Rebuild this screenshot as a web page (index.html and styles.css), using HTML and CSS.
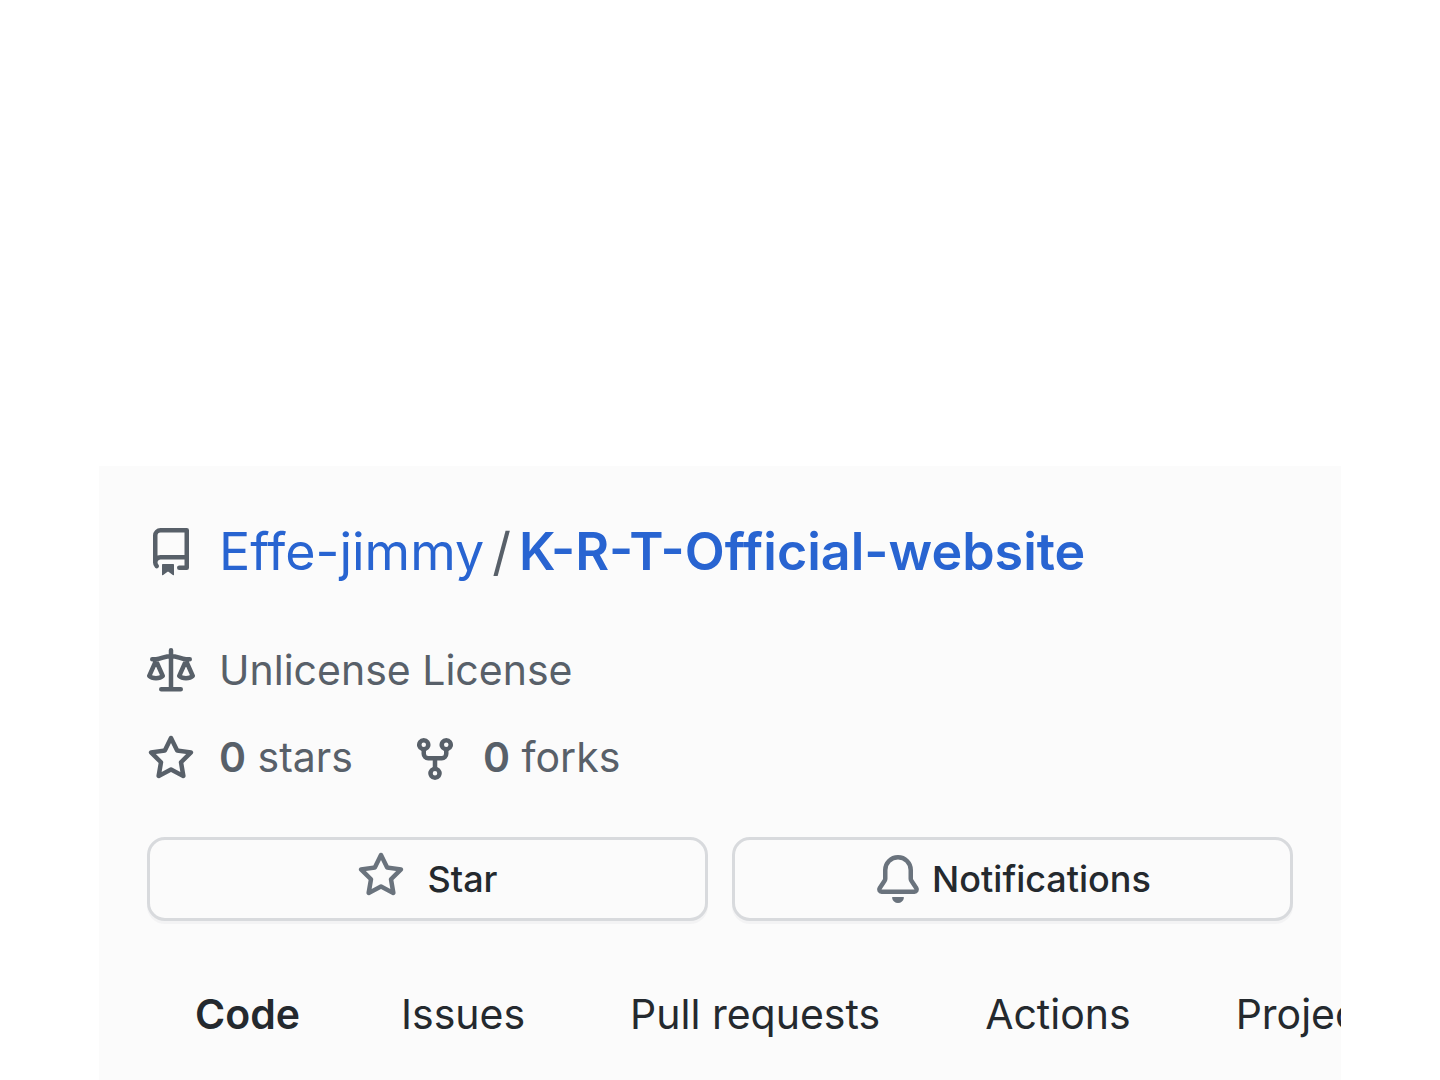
FILE: index.html
```html
<!DOCTYPE html>
<html lang="en">
<head>
<meta charset="utf-8">
<meta name="viewport" content="width=device-width, initial-scale=1">
<title>Effe-jimmy/K-R-T-Official-website</title>
<link rel="stylesheet" href="styles.css">
</head>
<body>
<svg class="sprite" aria-hidden="true">
  <symbol id="star" viewBox="0 0 16 16"><path fill-rule="evenodd" d="M8 .25a.75.75 0 01.673.418l1.882 3.815 4.21.612a.75.75 0 01.416 1.279l-3.046 2.97.719 4.192a.75.75 0 01-1.088.791L8 12.347l-3.766 1.98a.75.75 0 01-1.088-.79l.72-4.194L.818 6.374a.75.75 0 01.416-1.28l4.21-.611L7.327.668A.75.75 0 018 .25zm0 2.445L6.615 5.5a.75.75 0 01-.564.41l-3.097.45 2.24 2.184a.75.75 0 01.216.664l-.528 3.084 2.769-1.456a.75.75 0 01.698 0l2.77 1.456-.53-3.084a.75.75 0 01.216-.664l2.24-2.183-3.096-.45a.75.75 0 01-.564-.41L8 2.694z"/></symbol>
</svg>
<main class="repo">
  <h1 class="title">
    <svg class="icon" viewBox="0 0 16 16" aria-hidden="true"><path fill-rule="evenodd" d="M2 2.5A2.5 2.5 0 014.5 0h8.75a.75.75 0 01.75.75v12.5a.75.75 0 01-.75.75h-2.5a.75.75 0 110-1.5h1.75v-2h-8a1 1 0 00-.714 1.7.75.75 0 01-1.072 1.05A2.495 2.495 0 012 11.5v-9zm10.5-1V9h-8c-.356 0-.694.074-1 .208V2.5a1 1 0 011-1h8zM5 12.25v3.25a.25.25 0 00.4.2l1.45-1.087a.25.25 0 01.3 0L8.6 15.7a.25.25 0 00.4-.2v-3.25a.25.25 0 00-.25-.25h-3.5a.25.25 0 00-.25.25z"/></svg>
    <a class="owner" href="#owner">Effe-jimmy</a>
    <span class="slash">/</span>
    <a class="name" href="#repo">K-R-T-Official-website</a>
  </h1>
  <div class="meta">
    <a class="fact" href="#license"><svg class="icon" viewBox="0 0 16 16" aria-hidden="true"><g fill="none" stroke="currentColor" stroke-width="1.5" stroke-linecap="round" stroke-linejoin="round"><path d="M8 .75v13M4.75 13.75h6.5M1.75 3.75h1.2C4.8 3.75 5.8 2.65 8 2.65s3.2 1.1 5.05 1.1h1.2M3 4.25L.75 9.3c1 1 3.5 1 4.5 0zM13 4.25L10.75 9.3c1 1 3.5 1 4.5 0z"/></g></svg><span>Unlicense License</span></a>
    <div class="counts">
      <a class="fact" href="#stars"><svg class="icon" aria-hidden="true"><use href="#star"/></svg><span><b>0</b> stars</span></a>
      <a class="fact" href="#forks"><svg class="icon" viewBox="0 0 16 16" aria-hidden="true"><path fill-rule="evenodd" d="M5 3.25a.75.75 0 11-1.5 0 .75.75 0 011.5 0zm0 2.122a2.25 2.25 0 10-1.5 0v.878A2.25 2.25 0 005.75 8.5h1.5v2.128a2.251 2.251 0 101.5 0V8.5h1.5a2.25 2.25 0 002.25-2.25v-.878a2.25 2.25 0 10-1.5 0v.878a.75.75 0 01-.75.75h-4.5A.75.75 0 015 6.25v-.878zm3.75 7.378a.75.75 0 11-1.5 0 .75.75 0 011.5 0zm3-8.75a.75.75 0 100-1.5.75.75 0 000 1.5z"/></svg><span><b>0</b> forks</span></a>
    </div>
  </div>
  <div class="actions">
    <button class="btn btn-star" type="button"><svg class="icon" aria-hidden="true"><use href="#star"/></svg>Star</button>
    <button class="btn" type="button"><svg class="icon" viewBox="0 0 16 16" aria-hidden="true"><path d="M8 16a2 2 0 001.985-1.75c.017-.137-.097-.25-.235-.25h-3.5c-.138 0-.252.113-.235.25A2 2 0 008 16z"/><path fill-rule="evenodd" d="M8 1.5A3.5 3.5 0 004.5 5v2.947c0 .346-.102.683-.294.97l-1.703 2.556a.018.018 0 00-.003.01l.001.006c0 .002.002.004.004.006a.017.017 0 00.006.004l.007.001h10.964l.007-.001a.016.016 0 00.006-.004.016.016 0 00.004-.006l.001-.007a.017.017 0 00-.003-.01l-1.703-2.554a1.75 1.75 0 01-.294-.97V5A3.5 3.5 0 008 1.5zM3 5a5 5 0 0110 0v2.947c0 .05.015.098.042.139l1.703 2.555A1.518 1.518 0 0113.482 13H2.518a1.518 1.518 0 01-1.263-2.36l1.703-2.554A.25.25 0 003 7.947V5z"/></svg>Notifications</button>
  </div>
  <nav class="tabs" aria-label="Repository">
    <a class="tab current" href="#code" aria-current="page">Code</a>
    <a class="tab" href="#issues">Issues</a>
    <a class="tab" href="#pulls">Pull requests</a>
    <a class="tab" href="#actions">Actions</a>
    <a class="tab" href="#projects">Projects</a>
  </nav>
</main>
</body>
</html>
```

FILE: styles.css
```css
* { box-sizing: border-box; }
body {
  margin: 0;
  padding: 466px 99px 0;
  background: #fff;
  color: #24292e;
  font: 41px/60px Inter, "Liberation Sans", sans-serif;
}
a { color: inherit; text-decoration: none; }
b { font-weight: 600; }
.sprite { display: none; }
.icon { flex: none; width: 48px; height: 48px; fill: currentColor; }
.repo {
  min-height: calc(100vh - 466px);
  padding-top: 48px;
  background: #fbfbfb;
  overflow: hidden;
}
.title {
  display: flex;
  align-items: center;
  margin: 0 48px;
  font-size: 52px;
  font-weight: 400;
  line-height: 76px;
  color: #586069;
}
.title .icon { margin-right: 24px; }
.title a { color: #2864d1; }
.slash { margin: 0 8px; }
.title .name { font-weight: 600; }
.meta {
  display: flex;
  flex-direction: column;
  gap: 27px;
  margin: 50px 48px 0;
  color: #586069;
}
.counts { display: flex; gap: 58px; }
.fact { display: flex; align-items: center; gap: 24px; }
.fact .icon { margin-top: 4px; }
.actions { display: flex; gap: 24px; margin: 50px 48px 0; }
.btn {
  display: flex;
  flex: 1;
  align-items: center;
  justify-content: center;
  gap: 10px;
  height: 84px;
  padding: 0;
  border: 3px solid #d8dadd;
  border-radius: 18px;
  background: #fbfbfb;
  box-shadow: 0 3px 0 #f3f3f4;
  color: #24292e;
  font: 500 36px/60px Inter, "Liberation Sans", sans-serif;
}
.btn .icon { color: #6a737d; }
.btn-star { gap: 22px; }
.btn-star .icon { margin-bottom: 6px; }
.tabs { display: flex; gap: 105px; padding: 63px 96px 33px; white-space: nowrap; }
.current { margin-right: -4px; font-weight: 600; }
```
